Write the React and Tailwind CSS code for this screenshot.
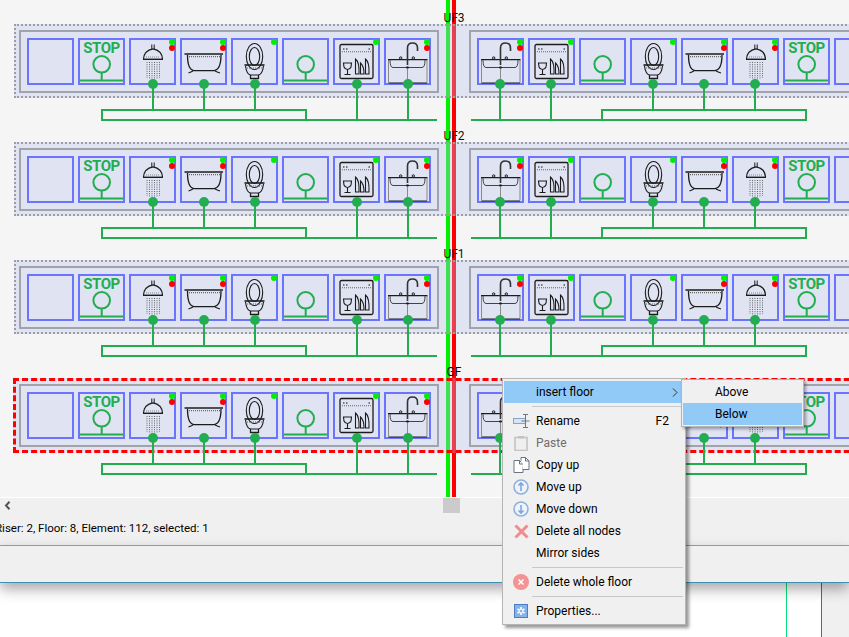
const GREEN = "#22ae50";
const INK = "#1c1c1c";

function Leds({ red }) {
  return (
    <>
      <circle cx="43" cy="4" r="3" fill="#00ee00" />
      {red && <circle cx="43" cy="10" r="3" fill="#ff0000" />}
    </>
  );
}

function Shower() {
  return (
    <g fill="none" stroke={INK} strokeWidth="1">
      <path d="M22.8 6.5V11M25.2 6.5V11" />
      <path d="M14.5 21Q15 12.5 24 10.8Q33 12.5 33.5 21" strokeWidth="1.2" />
      <path d="M14 21.3H34" strokeWidth="1.4" />
      <path d="M17 19H31" stroke="#888" strokeDasharray="1 1" />
      <path d="M18 24V40M20.5 24V41M23 24V43M25.5 24V43M28 24V41M30.5 24V40" stroke="#666" strokeDasharray="1 1.2" />
    </g>
  );
}

function Tub() {
  return (
    <g fill="none" stroke={INK} strokeWidth="1.1">
      <path d="M4.5 16H43" strokeWidth="1.6" />
      <path d="M7.5 17C7.5 28 9.5 32 14 32.6H34C38.5 32 41 28 41 17" strokeWidth="1.3" />
      <path d="M9 18.6H40" stroke="#666" strokeDasharray="1 1" />
      <path d="M13 33Q11 34 8.5 35M35 33Q37 34 40 35" />
    </g>
  );
}

function Toilet() {
  return (
    <g fill="none" stroke={INK} strokeWidth="1.1">
      <ellipse cx="23.5" cy="18.5" rx="8.2" ry="13" />
      <ellipse cx="23.5" cy="18.5" rx="5.2" ry="9" />
      <path d="M13.5 27H33.5" strokeWidth="1.6" />
      <path d="M14.5 28Q15.5 36 19.5 37H27.5Q31.5 36 32.5 28" />
      <path d="M16 30H31" stroke="#666" strokeDasharray="1 1" />
      <path d="M19.5 37V40.5H27.5V37" strokeWidth="1.3" />
    </g>
  );
}

function Dishwasher() {
  return (
    <g fill="none" stroke={INK} strokeWidth="1.1">
      <rect x="7" y="6.5" width="33" height="34" rx="1.5" strokeWidth="1.3" />
      <path d="M10 11H11.5M13 11H14.5M35.5 11H37" strokeWidth="1.3" stroke="#555" />
      <path d="M9 13.8H38.5" stroke="#666" strokeDasharray="1 1" />
      <path d="M10.5 25H18.5L18 29Q17 31.5 14.5 31.5Q12 31.5 11 29ZM14.5 31.5V36M11.5 36.5H17.5" />
      <path d="M22.5 21Q26.5 24 26 36H22.5ZM27.5 25Q31 28 31 36H27.5ZM32.5 21Q36.5 24 36 36H32.5Z" />
    </g>
  );
}

function Sink() {
  return (
    <g fill="none" stroke={INK} strokeWidth="1">
      <path d="M4.5 44.5V22M43 22V44.5M23.5 28V44.5" stroke="#8a8a8a" />
      <path d="M4.5 45H43" />
      <path d="M4 21.7H43.5" strokeWidth="1.2" />
      <path d="M6 22Q6 29.5 9 29.5H38Q41 29.5 41 22" stroke="#444" />
      <path d="M22 29.5H25" strokeWidth="1.6" />
      <path d="M23.5 27V10Q23.5 5 28.5 5Q33.5 5 33.5 10V13" strokeWidth="1.6" stroke="#333" />
      <circle cx="16.7" cy="20" r="1.2" />
      <circle cx="29.3" cy="20" r="1.2" />
    </g>
  );
}

const icons = {
  shower: [Shower, true],
  tub: [Tub, true],
  toilet: [Toilet, false],
  dish: [Dishwasher, false],
  sink: [Sink, true],
};

function Tile({ kind }) {
  const isStop = kind === "stop" || kind === "node";
  const entry = icons[kind];
  const Icon = entry && entry[0];
  return (
    <div className="relative h-[47px] w-[47px] shrink-0 border-2 border-[#6b74ff]">
      {kind === "stop" && (
        <span className="block text-center text-[15px] leading-[16px] font-bold tracking-[-0.5px] text-[#22ae50]">STOP</span>
      )}
      {kind !== "empty" && (
        <svg className="absolute -top-[2px] -left-[2px] overflow-visible" width="47" height="47" viewBox="0 0 47 47">
          {isStop && (
            <g fill="none" stroke={GREEN} strokeWidth="2">
              <circle cx="23.7" cy="26.3" r="8.3" />
              <path d="M23.7 34.6V42M2 42.5H45" />
            </g>
          )}
          {Icon && <Icon />}
          {entry && <Leds red={entry[1]} />}
        </svg>
      )}
    </div>
  );
}

function Panel({ kinds }) {
  return (
    <div className="flex shrink-0 gap-1 border-2 border-[#a0a3ab] p-1.5">
      {kinds.map((k, i) => (
        <Tile key={i} kind={k} />
      ))}
    </div>
  );
}

function Bus() {
  const stems = [153, 204, 255, 357, 408, 500, 551, 653, 704, 755];
  return (
    <svg className="absolute top-0 left-0" width="849" height="118" viewBox="0 0 849 118">
      <g fill="none" stroke={GREEN} strokeWidth="2">
        <path d="M102 86H306V96H102ZM306 96H437M471 96H806V86H602V96" />
        {stems.map((x) => (
          <path key={x} d={"M" + x + " 60V" + (x === 357 || x === 408 || x === 500 || x === 551 ? 96 : 86)} />
        ))}
      </g>
      {stems.map((x) => (
        <circle key={x} cx={x} cy="60" r="5" fill={GREEN} />
      ))}
    </svg>
  );
}

const leftKinds = ["empty", "stop", "shower", "tub", "toilet", "node", "dish", "sink"];
const rightKinds = ["sink", "dish", "node", "toilet", "tub", "shower", "stop", "empty"];

function Floor({ label, selected }) {
  return (
    <div className="relative h-[118px]">
      <div
        className={
          selected
            ? "relative ml-[13px] flex w-[900px] gap-[30px] border-[3px] border-dashed border-[#ff0000] bg-[#b6bfec55] px-[3px] py-[3px]"
            : "relative ml-[14px] flex w-[900px] gap-[30px] border-2 border-dotted border-[#9a9da5] bg-[#b6bfec55] px-[3px] pt-1 pb-[3px]"
        }
      >
        <Panel kinds={leftKinds} />
        <Panel kinds={rightKinds} />
      </div>
      <Bus />
      <span className="absolute top-[-14px] left-[454px] -translate-x-1/2 text-xs leading-[16px] text-[#111]">{label}</span>
    </div>
  );
}

function MenuRow({ icon, label, hint, arrow, active, disabled }) {
  return (
    <div className={"flex h-[22px] items-center " + (active ? "bg-[#91c9f7] " : "") + (disabled ? "text-[#6d6d6d]" : "text-black")}>
      <div className="flex w-8 shrink-0 items-center justify-center pl-0.5">{icon}</div>
      <span>{label}</span>
      {hint && <span className="ml-auto pr-[15px]">{hint}</span>}
      {arrow && (
        <svg className="ml-auto mr-[6px]" width="6" height="9" viewBox="0 0 6 9">
          <path d="M1 .5L5 4.5L1 8.5" fill="none" stroke="#333" />
        </svg>
      )}
    </div>
  );
}

function MenuLine() {
  return (
    <div className="flex h-[7px] pt-[3px] pl-[28px] pr-[1px]">
      <div className="h-px flex-1 bg-[#c9c9c9]" />
    </div>
  );
}

const RenameIcon = (
  <svg width="17" height="14" viewBox="0 0 17 14">
    <rect x="0.5" y="4.5" width="12" height="5" fill="#d6e6f6" stroke="#7ea6cf" />
    <path d="M10 .5H15M12.5 .5V13.5M10 13.5H15M8.5 7H16.5" fill="none" stroke="#6b7785" />
  </svg>
);
const PasteIcon = (
  <svg width="14" height="15" viewBox="0 0 14 15">
    <rect x="1" y="1.5" width="12" height="13" fill="#efefef" stroke="#c4c4c4" strokeWidth="1.6" />
    <rect x="4" y="0" width="6" height="2.5" fill="#c4c4c4" />
  </svg>
);
const CopyIcon = (
  <svg width="17" height="16" viewBox="0 0 17 16">
    <path d="M6.5 3.5H1V15.5H10V7Z" fill="#fff" stroke="#6b7280" />
    <path d="M8 3.5V.5H12.5L16 4V12.5H10" fill="#fff" stroke="#6b7280" />
    <path d="M6.5 3.5V7H10M12.5 .5V4H16" fill="none" stroke="#6b7280" />
  </svg>
);
function ArrowCircle({ down }) {
  return (
    <svg width="16" height="16" viewBox="0 0 16 16">
      <circle cx="8" cy="8" r="7" fill="#eef3fa" stroke="#8fb0de" strokeWidth="1.6" />
      <path d={down ? "M8 4V12M5.5 9.5L8 12L10.5 9.5" : "M8 12V4M5.5 6.5L8 4L10.5 6.5"} fill="none" stroke="#7fa6dc" strokeWidth="1.6" />
    </svg>
  );
}
const CrossIcon = (
  <svg width="15" height="15" viewBox="0 0 15 15">
    <path d="M1.5 1.5L13.5 13.5M13.5 1.5L1.5 13.5" stroke="#ee8d8d" strokeWidth="3" />
  </svg>
);
const DeleteIcon = (
  <svg width="16" height="16" viewBox="0 0 16 16">
    <circle cx="8" cy="8" r="8" fill="#f39393" />
    <path d="M5.5 5.5L10.5 10.5M10.5 5.5L5.5 10.5" stroke="#fff" strokeWidth="1.5" />
  </svg>
);
const PropsIcon = (
  <svg width="14" height="14" viewBox="0 0 14 14">
    <rect x="0.5" y="0.5" width="13" height="13" fill="#86b2ea" stroke="#4d7fc0" />
    <path d="M7 3V11M3.5 5L10.5 9M10.5 5L3.5 9" stroke="#fff" strokeWidth="1.6" />
    <circle cx="7" cy="7" r="1.3" fill="#86b2ea" />
  </svg>
);

function ContextMenu() {
  return (
    <div className="absolute top-[378px] left-[502px] z-10 w-[184px] border border-[#b5b5b5] bg-[#f0f0f0] px-[1px] py-[2px] text-xs leading-4 shadow-[3px_3px_3px_rgba(0,0,0,0.4)]">
      <MenuRow label="insert floor" arrow active />
      <MenuLine />
      <MenuRow icon={RenameIcon} label="Rename" hint="F2" />
      <MenuRow icon={PasteIcon} label="Paste" disabled />
      <MenuRow icon={CopyIcon} label="Copy up" />
      <MenuRow icon={<ArrowCircle />} label="Move up" />
      <MenuRow icon={<ArrowCircle down />} label="Move down" />
      <MenuRow icon={CrossIcon} label="Delete all nodes" />
      <MenuRow label="Mirror sides" />
      <MenuLine />
      <MenuRow icon={DeleteIcon} label="Delete whole floor" />
      <MenuLine />
      <MenuRow icon={PropsIcon} label="Properties..." />
    </div>
  );
}

function SubMenu() {
  return (
    <div className="absolute top-[379px] left-[681px] z-20 w-[123px] border border-[#b5b5b5] bg-[#f0f0f0] p-[1px] text-xs leading-4 shadow-[2px_2px_3px_rgba(0,0,0,0.35)]">
      <div className="flex h-[22px] items-center pl-8">Above</div>
      <div className="flex h-[22px] items-center bg-[#91c9f7] pl-8">Below</div>
    </div>
  );
}

export default function App() {
  return (
    <div className="relative flex h-[637px] w-[849px] flex-col overflow-hidden bg-white font-['Roboto',sans-serif]">
      <div className="relative h-[497px] shrink-0 overflow-hidden bg-[#f5f5f5] pt-6">
        <div className="absolute top-0 bottom-0 left-[446px] flex gap-0.5">
          <div className="w-1 bg-[#00f000]" />
          <div className="w-1 bg-[#ff0000]" />
        </div>
        <Floor label="UF3" />
        <Floor label="UF2" />
        <Floor label="UF1" />
        <Floor label="GF" selected />
      </div>

      <div className="mt-px flex h-[15px] shrink-0 items-center bg-[#f0f0f0] pl-1">
        <svg width="7" height="9" viewBox="0 0 7 9">
          <path d="M5.5 .8L2 4.5L5.5 8.2" fill="none" stroke="#555" strokeWidth="2" />
        </svg>
        <div className="ml-[432px] h-[15px] w-[17px] bg-[#cbcbcb]" />
      </div>

      <div className="flex h-[33px] shrink-0 items-center overflow-hidden border-b border-[#a0a0a0] bg-[#f0f0f0] text-[11.5px] text-black">
        <span className="-ml-[5px] whitespace-nowrap">Riser: 2, Floor: 8, Element: 112, selected: 1</span>
      </div>

      <div className="relative z-[1] h-[37px] shrink-0 border-b border-[#3b8fb3] bg-[#f0f0f0] shadow-[0_6px_14px_rgba(0,0,0,0.35)]" />

      <div className="flex flex-1">
        <div className="w-[786px] shrink-0" />
        <div className="w-[35px] shrink-0 border-l border-[#00e27a]" />
        <div className="flex-1 border-l border-[#666] bg-[#f0f0f0]" />
      </div>

      <ContextMenu />
      <SubMenu />
    </div>
  );
}
